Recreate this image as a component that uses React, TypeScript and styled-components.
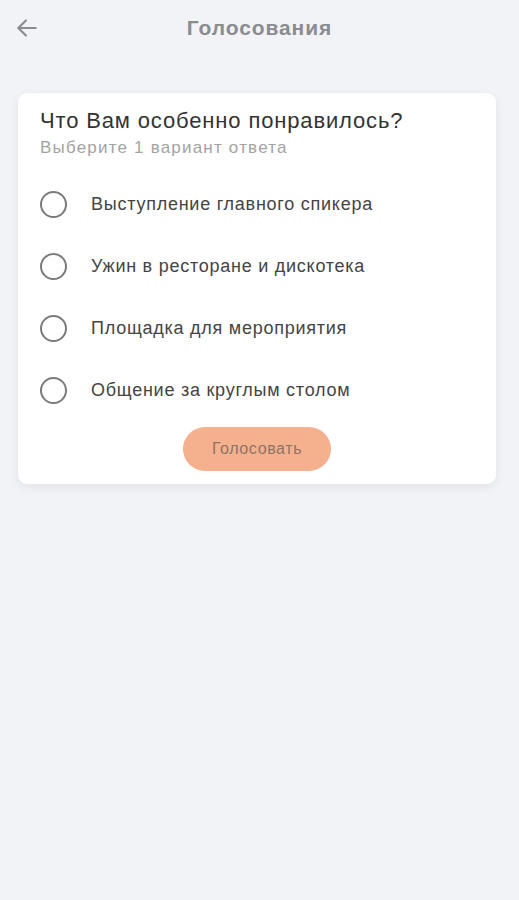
import React from "react";
import styled, { createGlobalStyle } from "styled-components";

const Global = createGlobalStyle`
  html, body { margin: 0; padding: 0; background: #f2f3f6; }
  body { font-family: "Liberation Sans", Arial, sans-serif; }
`;

const Page = styled.div`
  width: 519px;
  min-height: 900px;
  background: #f2f3f6;
  display: flex;
  flex-direction: column;
`;

const Header = styled.header`
  height: 56px;
  display: flex;
  align-items: center;
  justify-content: center;
  position: relative;
`;

const BackButton = styled.button`
  position: absolute;
  left: 12px;
  top: 13px;
  width: 30px;
  height: 30px;
  border: 0;
  background: transparent;
  padding: 0;
  display: flex;
  align-items: center;
  justify-content: center;
`;

const Title = styled.h1`
  margin: 0;
  font-size: 21px;
  font-weight: 700;
  letter-spacing: 0.9px;
  color: #8b8c90;
`;

const Card = styled.section`
  margin: 37px 23px 0 18px;
  background: #fff;
  border-radius: 9px;
  box-shadow: 0 3px 10px rgba(0, 0, 0, 0.07);
  padding: 14px 22px 13px 22px;
  display: flex;
  flex-direction: column;
`;

const Question = styled.h2`
  margin: 0;
  font-size: 22px;
  font-weight: 400;
  letter-spacing: 0.85px;
  color: #333;
  line-height: 28px;
`;

const Hint = styled.p`
  margin: 3px 0 0;
  font-size: 17px;
  letter-spacing: 1.2px;
  color: #a3a3a3;
  line-height: 20px;
`;

const Options = styled.div`
  margin-top: 33px;
  display: flex;
  flex-direction: column;
  gap: 35px;
`;

const Option = styled.label`
  display: flex;
  align-items: center;
  gap: 24px;
  height: 27px;
  cursor: pointer;
`;

const Radio = styled.span`
  width: 27px;
  height: 27px;
  box-sizing: border-box;
  border-radius: 50%;
  border: 2px solid #7a7a7a;
  flex: none;
`;

const OptionText = styled.span`
  font-size: 18px;
  letter-spacing: 0.75px;
  color: #444;
`;

const VoteButton = styled.button`
  align-self: center;
  margin-top: 23px;
  width: 148px;
  height: 44px;
  border: 0;
  border-radius: 22px;
  background: #f5b08e;
  color: #8c7466;
  font-family: inherit;
  font-size: 16px;
  letter-spacing: 0.6px;
`;

const options = [
  "Выступление главного спикера",
  "Ужин в ресторане и дискотека",
  "Площадка для мероприятия",
  "Общение за круглым столом",
];

export default function App() {
  return (
    <Page>
      <Global />
      <Header>
        <BackButton aria-label="Назад">
          <svg width="26" height="26" viewBox="0 0 24 24" fill="none" stroke="#8b8c90" strokeWidth="2" strokeLinecap="round" strokeLinejoin="round">
            <path d="M20 12H5" />
            <path d="M11 5l-7 7 7 7" />
          </svg>
        </BackButton>
        <Title>Голосования</Title>
      </Header>
      <Card>
        <Question>Что Вам особенно понравилось?</Question>
        <Hint>Выберите 1 вариант ответа</Hint>
        <Options>
          {options.map((o) => (
            <Option key={o}>
              <Radio />
              <OptionText>{o}</OptionText>
            </Option>
          ))}
        </Options>
        <VoteButton>Голосовать</VoteButton>
      </Card>
    </Page>
  );
}
